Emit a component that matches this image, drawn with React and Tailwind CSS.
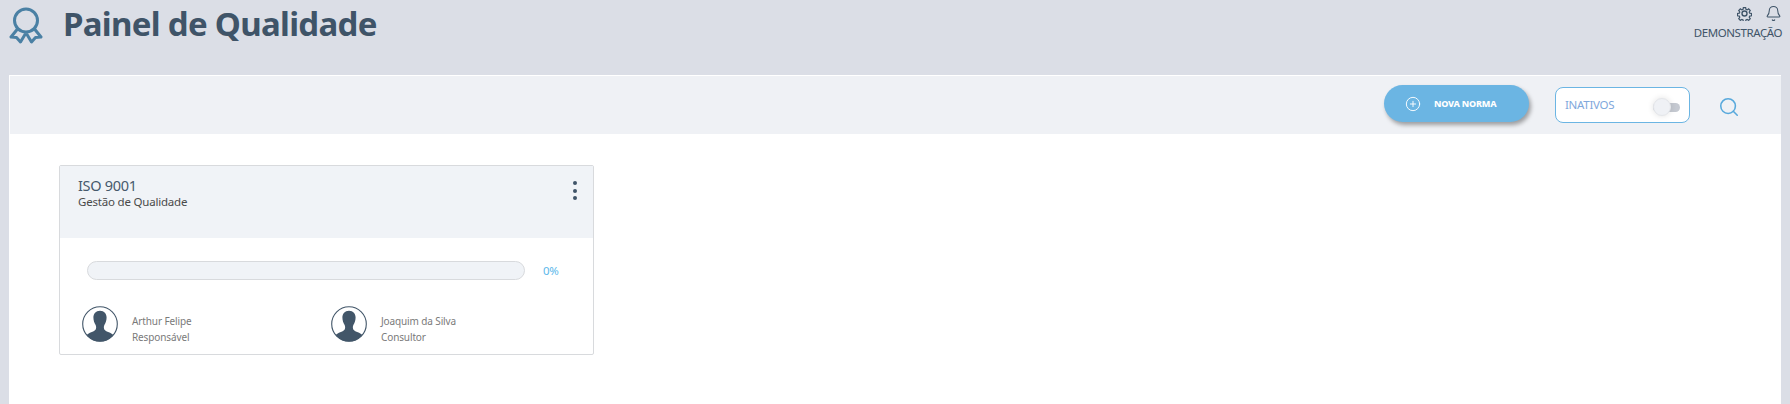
import React from "react";
import { Search, CirclePlus, Bell } from "lucide-react";

function Ribbon() {
  return (
    <svg width="34" height="38" viewBox="0 0 34 38" fill="none" stroke="#4a80a4" strokeWidth="3" strokeLinejoin="round" strokeLinecap="round">
      <circle cx="17" cy="13.5" r="11.5" />
      <path d="M8.500 22 L2 30 L7.500 30.500 L11.500 35 L16 27.500" />
      <path d="M25.500 22 L32 30 L26.500 30.500 L22.500 35 L18 27.500" />
    </svg>
  );
}

function Gear() {
  return (
    <svg width="15" height="15" viewBox="0 0 24 24" fill="none" stroke="#3f5468" strokeWidth="2.200">
      <circle cx="12" cy="12" r="4" />
      <path d="M10 1.5h4l.6 3.2 2 .9 2.8-1.800 2.800 2.800-1.800 2.800.9 2 3.200.6v4l-3.200.6-.9 2 1.800 2.800-2.800 2.800-2.800-1.800-2 .9-.6 3.200h-4l-.6-3.200-2-.9-2.800 1.800-2.800-2.800 1.800-2.800-.9-2-3.200-.6v-4l3.200-.6.9-2-1.800-2.800 2.800-2.800 2.800 1.800 2-.9z" transform="translate(1.200 1.200) scale(.9)" />
    </svg>
  );
}

function Avatar() {
  return (
    <svg width="36" height="36" viewBox="0 0 36 36" className="shrink-0">
      <defs>
        <clipPath id="avatar-clip"><circle cx="18" cy="18" r="17.500" /></clipPath>
      </defs>
      <circle cx="18" cy="18" r="17.500" fill="#fff" />
      <g clipPath="url(#avatar-clip)" fill="#425669">
        <path d="M18 4.700c-4.200 0-6.600 3-6.600 6.900 0 2.800.9 5.300 2.100 7.100.8 1.200.8 3.400.3 4.600-.5 1.100-2 2-4 2.800-2.700 1.100-4.600 2-6 4.300V37h28.400v-6.600c-1.400-2.300-3.300-3.200-6-4.300-2-.8-3.500-1.700-4-2.800-.5-1.200-.5-3.400.3-4.600 1.200-1.800 2.100-4.300 2.100-7.100 0-3.900-2.400-6.900-6.600-6.900z" />
      </g>
      <circle cx="18" cy="18" r="17.300" fill="none" stroke="#425669" strokeWidth="1.100" />
    </svg>
  );
}

function Person({ name, role, className }) {
  return (
    <div className={"flex items-start gap-[14px] " + className}>
      <Avatar />
      <div className="mt-[7px] text-[10px] leading-[16px] tracking-[-0.12px] text-[#7a7a7a]">
        <div>{name}</div>
        <div>{role}</div>
      </div>
    </div>
  );
}

export default function App() {
  return (
    <div className="h-[404px] w-[1790px] overflow-hidden bg-[#dbdee6] font-['Noto_Sans',sans-serif] flex flex-col">
      <header className="h-[75px] shrink-0 flex justify-between">
        <div className="flex items-start pl-[9px] pt-[7px]">
          <Ribbon />
          <h1 className="ml-[20px] -mt-[1px] text-[33px] leading-[36px] font-bold tracking-[-0.7px] text-[#3f5468]">Painel de Qualidade</h1>
        </div>
        <div className="flex flex-col items-end pr-[8px] pt-[5px]">
          <div className="flex items-center gap-[13px]">
            <Gear />
            <Bell size={17} strokeWidth={1.500} color="#3f5468" />
          </div>
          <div className="mt-[3px] text-[11.500px] leading-[16px] tracking-[-0.42px] text-[#3f5468]">DEMONSTRAÇÃO</div>
        </div>
      </header>

      <main className="ml-[9px] mr-[9px] flex-1 bg-white border-l border-t border-white">
        <div className="h-[58px] bg-[#eff1f5] flex items-start justify-end pt-[9px] pr-[41px]">
          <button className="h-[37px] w-[145px] rounded-full bg-[#6bb5e3] shadow-[2px_3px_4px_rgba(0,0,0,0.35)] text-white flex items-center pl-[21px]">
            <CirclePlus size={16} strokeWidth={1.400} />
            <span className="ml-[13px] text-[9px] font-extrabold tracking-[-0.2px]">NOVA NORMA</span>
          </button>
          <div className="ml-[26px] mt-[2px] h-[36px] w-[135px] rounded-[8px] border border-[#6bb5e3] bg-white flex items-center pl-[9px] relative">
            <span className="text-[11.500px] tracking-[-0.3px] text-[#7fa8dc]">INATIVOS</span>
            <span className="absolute left-[97px] top-[15px] h-[9px] w-[27px] rounded-full bg-[#c5c9d1]" />
            <span className="absolute left-[97px] top-[10px] h-[18px] w-[18px] rounded-full bg-[#eff1f5] border border-[#e4e6ea] shadow-[0_0_6px_rgba(0,0,0,0.12)]" />
          </div>
          <Search size={22} strokeWidth={1.700} color="#58a9dc" className="ml-[28px] mt-[11px]" />
        </div>

        <section className="pl-[49px] pt-[31px]">
          <article className="w-[535px] h-[190px] border border-[#d8dadd] rounded-[2px] bg-white">
            <div className="h-[72px] bg-[#f0f3f7] pl-[18px] pt-[9px] flex justify-between">
              <div>
                <div className="text-[14.500px] leading-[20px] tracking-[-0.3px] text-[#46596c]">ISO 9001</div>
                <div className="text-[11.500px] leading-[14px] tracking-[-0.2px] text-[#4a4a4a]">Gestão de Qualidade</div>
              </div>
              <div className="flex flex-col gap-[3.500px] pr-[16px] pt-[6px]">
                <span className="h-[4px] w-[4px] rounded-full bg-[#3f5468]" />
                <span className="h-[4px] w-[4px] rounded-full bg-[#3f5468]" />
                <span className="h-[4px] w-[4px] rounded-full bg-[#3f5468]" />
              </div>
            </div>
            <div className="flex items-center pl-[27px] pt-[23px]">
              <div className="h-[19px] w-[438px] rounded-full border border-[#d8dadd] bg-[#f0f3f7]" />
              <span className="ml-[18px] text-[11.500px] tracking-[-0.3px] text-[#5bb8ea]">0%</span>
            </div>
            <div className="flex pl-[22px] pt-[26px]">
              <Person name="Arthur Felipe" role="Responsável" className="w-[249px]" />
              <Person name="Joaquim da Silva" role="Consultor" className="" />
            </div>
          </article>
        </section>
      </main>
    </div>
  );
}
